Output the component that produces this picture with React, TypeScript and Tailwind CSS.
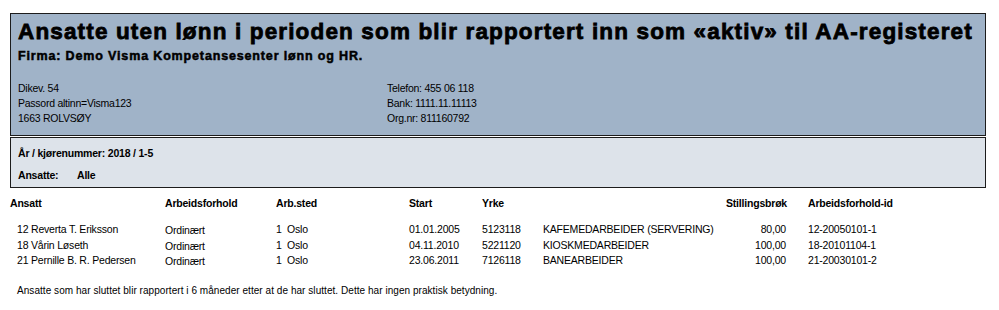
const rows = [
  {
    ansatt: "12 Reverta T. Eriksson",
    forhold: "Ordinært",
    sted: "1",
    stedNavn: "Oslo",
    start: "01.01.2005",
    kode: "5123118",
    yrke: "KAFEMEDARBEIDER (SERVERING)",
    brok: "80,00",
    id: "12-20050101-1",
  },
  {
    ansatt: "18 Vårin Løseth",
    forhold: "Ordinært",
    sted: "1",
    stedNavn: "Oslo",
    start: "04.11.2010",
    kode: "5221120",
    yrke: "KIOSKMEDARBEIDER",
    brok: "100,00",
    id: "18-20101104-1",
  },
  {
    ansatt: "21 Pernille B. R. Pedersen",
    forhold: "Ordinært",
    sted: "1",
    stedNavn: "Oslo",
    start: "23.06.2011",
    kode: "7126118",
    yrke: "BANEARBEIDER",
    brok: "100,00",
    id: "21-20030101-2",
  },
];

export default function App() {
  return (
    <div className="w-[999px] h-[310px] bg-white text-black font-['Liberation_Sans',Arial,sans-serif] pt-[13px] pl-[10px] overflow-hidden">
      {/* Header block */}
      <div className="w-[976px] h-[123px] bg-[#a0b3c8] border border-[#1c1c1c] px-[7px] pt-[4px]">
        <h1 className="text-[22.5px] leading-[28px] font-bold tracking-[1.15px] [-webkit-text-stroke:0.8px_black] whitespace-nowrap">
          Ansatte uten lønn i perioden som blir rapportert inn som «aktiv» til AA-registeret
        </h1>
        <p className="mt-[2px] text-[12.5px] leading-[16px] font-bold tracking-[0.85px] [-webkit-text-stroke:0.5px_black] whitespace-nowrap">
          Firma: Demo Visma Kompetansesenter lønn og HR.
        </p>
        <div className="flex mt-[16px] text-[10.5px] tracking-[-0.25px]">
          <div className="w-[369px] flex flex-col">
            <span className="leading-[16px]">Dikev. 54</span>
            <span className="leading-[15px]">Passord altinn=Visma123</span>
            <span className="leading-[15px]">1663 ROLVSØY</span>
          </div>
          <div className="flex flex-col">
            <span className="leading-[16px]">Telefon: 455 06 118</span>
            <span className="leading-[15px]">Bank: 1111.11.11113</span>
            <span className="leading-[15px]">Org.nr: 811160792</span>
          </div>
        </div>
      </div>

      {/* Selection block */}
      <div className="w-[976px] h-[51px] mt-[1px] bg-[#dde3ea] border border-[#1c1c1c] px-[7px] pt-[8px] text-[10.5px] font-bold tracking-[-0.2px]">
        <div className="leading-[14px]">År / kjørenummer: 2018 / 1-5</div>
        <div className="flex leading-[14px] mt-[8px]">
          <span className="w-[59px]">Ansatte:</span>
          <span>Alle</span>
        </div>
      </div>

      {/* Table */}
      <div className="text-[10.5px] tracking-[-0.2px]">
        <div className="flex font-bold leading-[14px] mt-[8px]">
          <span className="w-[155px]">Ansatt</span>
          <span className="w-[111px]">Arbeidsforhold</span>
          <span className="w-[133px]">Arb.sted</span>
          <span className="w-[73px]">Start</span>
          <span className="w-[244px]">Yrke</span>
          <span className="w-[60px] text-right">Stillingsbrøk</span>
          <span className="pl-[22px]">Arbeidsforhold-id</span>
        </div>
        <div className="mt-[12px] flex flex-col">
          {rows.map((r) => (
            <div key={r.id} className="flex leading-[15.5px]">
              <span className="w-[155px] pl-[7px]">{r.ansatt}</span>
              <span className="w-[111px] translate-y-[1px]">{r.forhold}</span>
              <span className="w-[133px] flex">
                <span className="w-[11px]">{r.sted}</span>
                <span>{r.stedNavn}</span>
              </span>
              <span className="w-[73px]">{r.start}</span>
              <span className="w-[61px]">{r.kode}</span>
              <span className="w-[183px]">{r.yrke}</span>
              <span className="w-[60px] text-right">{r.brok}</span>
              <span className="pl-[22px]">{r.id}</span>
            </div>
          ))}
        </div>
        <p className="mt-[16px] pl-[7px] text-[10px] tracking-[0.05px] leading-[12px]">
          Ansatte som har sluttet blir rapportert i 6 måneder etter at de har sluttet. Dette har ingen praktisk betydning.
        </p>
      </div>
    </div>
  );
}
